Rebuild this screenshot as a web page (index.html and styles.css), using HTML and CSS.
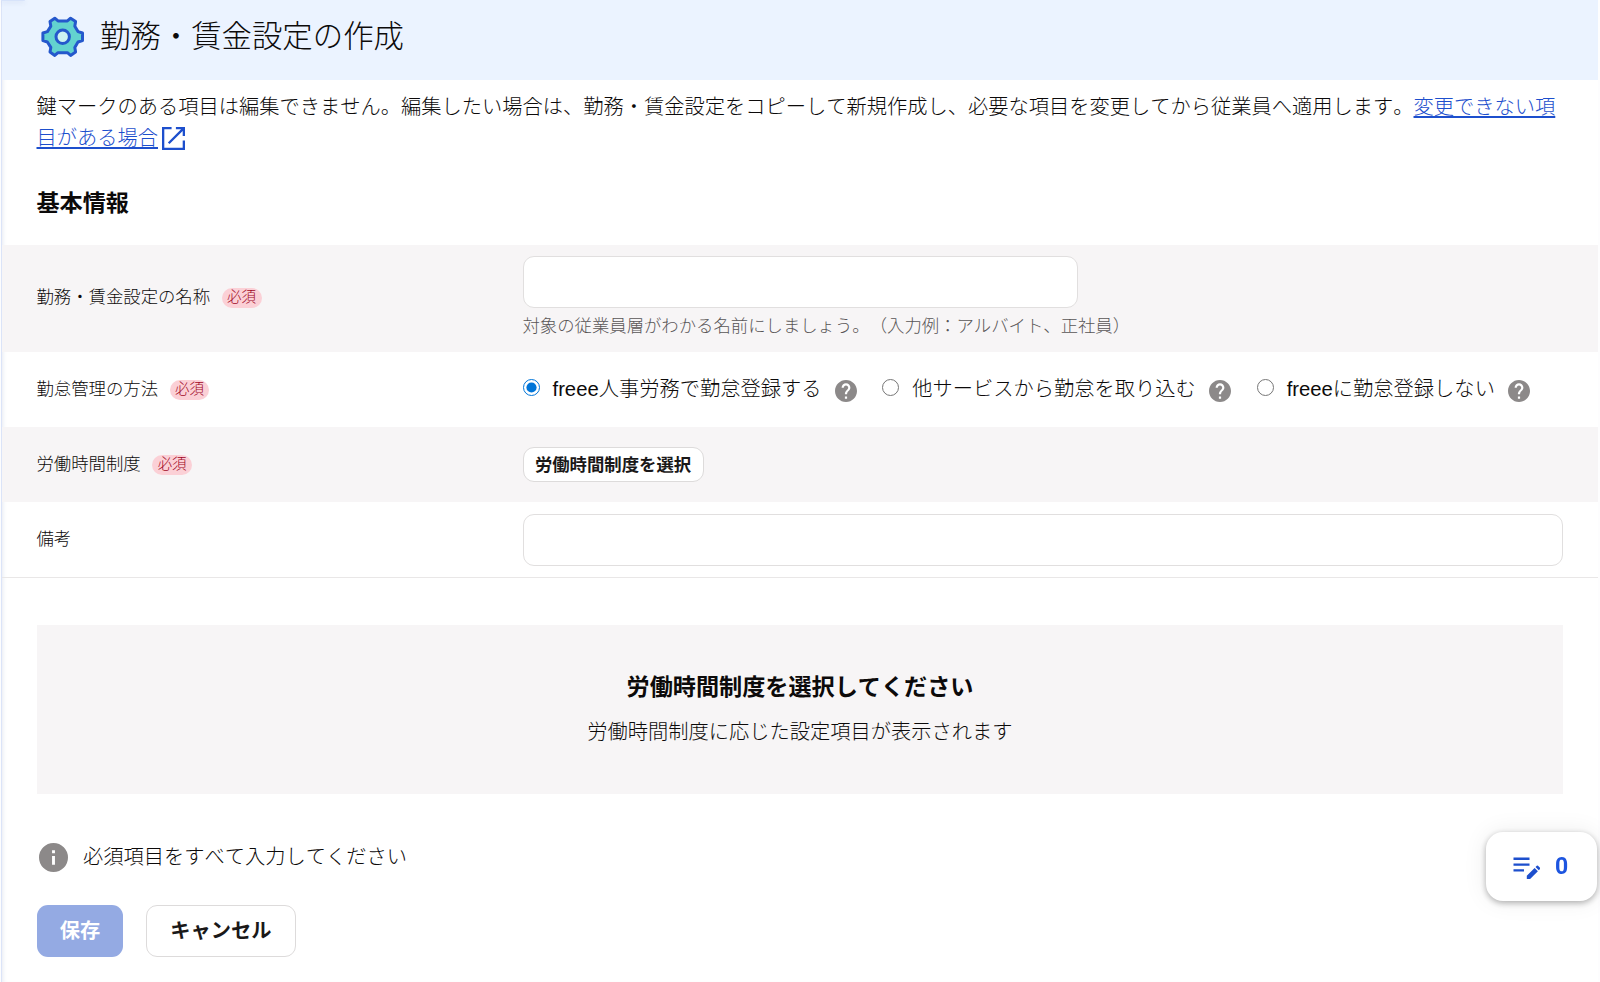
FILE: index.html
```
<!DOCTYPE html>
<html lang="ja">
<head>
    <meta charset="UTF-8">
    <meta name="viewport" content="width=device-width, initial-scale=1.0">
    <title>勤務・賃金設定の作成</title>
    <link rel="stylesheet" href="styles.css">
</head>
<body>
    <div class="page">
        <header class="page-header">
            <svg class="gear" viewBox="0 0 44 44">
                <path d="M9 6.500L13.800 3.200 17 5.900H26.400L29.600 3.200 34.600 6.500 33.800 11.200 37 16.600 41.500 18V25.600L37 27 33.800 32.400 34.600 37.100 29.600 40.400 26.400 37.700H17L13.800 40.400 9 37.100 9.800 32.400 6.400 27 1.900 25.600V18L6.400 16.600 9.800 11.200Z" fill="#63d3cf" stroke="#2558cc" stroke-width="3" stroke-linejoin="round"/>
                <circle cx="21.700" cy="21.800" r="6.700" fill="#cdf2f1" stroke="#2558cc" stroke-width="3"/>
            </svg>
            <h1>勤務・賃金設定の作成</h1>
        </header>

        <p class="lead">鍵マークのある項目は編集できません。編集したい場合は、勤務・賃金設定をコピーして新規作成し、必要な項目を変更してから従業員へ適用します。<a class="link" href="#">変更できない項目がある場合</a><svg class="external" viewBox="0 0 24 24"><path d="M10 1.200H1.200v21.600h21.600V14M14.500 1.200h8.300v8.300M22.300 1.700L7 17" fill="none" stroke="#1d4fcd" stroke-width="2.400"/></svg></p>

        <h2>基本情報</h2>

        <form class="settings" onsubmit="return false;">
            <div class="row row-name">
                <div class="label">勤務・賃金設定の名称<span class="badge">必須</span></div>
                <div class="field">
                    <input class="input input-name" type="text">
                    <div class="hint">対象の従業員層がわかる名前にしましょう。（入力例：アルバイト、正社員）</div>
                </div>
            </div>
            <div class="row">
                <div class="label">勤怠管理の方法<span class="badge">必須</span></div>
                <div class="field radios">
                    <label class="radio"><input type="radio" name="method" checked><span>freee人事労務で勤怠登録する</span></label>
                    <svg class="help" viewBox="0 0 24 24"><use href="#help-icon"/></svg>
                    <label class="radio"><input type="radio" name="method"><span>他サービスから勤怠を取り込む</span></label>
                    <svg class="help" viewBox="0 0 24 24"><use href="#help-icon"/></svg>
                    <label class="radio"><input type="radio" name="method"><span>freeeに勤怠登録しない</span></label>
                    <svg class="help" viewBox="0 0 24 24"><use href="#help-icon"/></svg>
                </div>
            </div>
            <div class="row">
                <div class="label">労働時間制度<span class="badge">必須</span></div>
                <div class="field">
                    <button class="btn btn-small" type="button">労働時間制度を選択</button>
                </div>
            </div>
            <div class="row row-note">
                <div class="label">備考</div>
                <div class="field">
                    <input class="input" type="text">
                </div>
            </div>
        </form>

        <section class="empty">
            <h3>労働時間制度を選択してください</h3>
            <p>労働時間制度に応じた設定項目が表示されます</p>
        </section>

        <div class="notice">
            <svg class="info" viewBox="0 0 24 24"><path d="M12 0a12 12 0 1 0 0 24 12 12 0 0 0 0-24zm1.200 18h-2.400v-7.200h2.400zm0-9.600h-2.400V6h2.400z" fill="#8c8989"/></svg>
            <span>必須項目をすべて入力してください</span>
        </div>

        <div class="actions">
            <button class="btn btn-primary" type="button">保存</button>
            <button class="btn btn-cancel" type="button">キャンセル</button>
        </div>
    </div>

    <!-- Bottom edge of the panel scrolled off the top -->
    <div class="corner"></div>

    <!-- Floating memo button -->
    <button class="memo" type="button">
        <svg class="memo-icon" viewBox="0 0 27 25"><path d="M.5 4.700h16M.5 10.600h16M.5 16.400h10.500" fill="none" stroke="#1d4fcd" stroke-width="2.400"/><path d="M13.800 25v-3.300l7.800-7.800 3.300 3.300L17.100 25zM22.500 13l1.300-1.300q.6-.5 1.200 0l2 2q.5.600 0 1.200L25.800 16.300z" fill="#1d4fcd"/></svg>
        <span>0</span>
    </button>

    <svg class="symbols">
        <symbol id="help-icon" viewBox="2 2 20 20">
            <path d="M12 2C6.480 2 2 6.480 2 12s4.480 10 10 10 10-4.480 10-10S17.520 2 12 2zm1 17h-2v-2h2v2zm2.070-7.750l-.9.920C13.450 12.900 13 13.500 13 15h-2v-.5c0-1.100.450-2.100 1.170-2.830l1.240-1.260c.370-.360.590-.860.590-1.410 0-1.100-.9-2-2-2s-2 .9-2 2H8c0-2.210 1.790-4 4-4s4 1.790 4 4c0 .880-.360 1.680-.930 2.250z" fill="#8c8989"/>
        </symbol>
    </svg>
</body>
</html>
```
FILE: styles.css
```
* {
    box-sizing: border-box;
}

body {
    margin: 0;
    height: 982px;
    overflow: hidden;
    background-color: #fdfdfe;
    color: #0c0a0a;
    font-family: "Liberation Sans", "Noto Sans CJK JP", sans-serif;
    font-size: 20.25px;
    font-weight: 300;
    font-kerning: none;
    line-height: 31px;
    text-spacing-trim: space-all;
}

h1, h2, h3, p {
    margin: 0;
}

/* Page frame */
.page {
    height: 982px;
    margin: 0 2px 0 1px;
    background-color: #fff;
    border-left: 1px solid #dbe4f8;
    box-shadow: inset 4px 0 4px -3px rgba(60, 80, 150, 0.12);
}

.page-header {
    display: flex;
    align-items: center;
    height: 80px;
    padding: 0 0 7px 39px;
    background-color: #ebf3ff;
}

.page-header h1 {
    margin-left: 15px;
    font-size: 30.4px;
    font-weight: 300;
}

.gear {
    width: 44px;
    height: 44px;
}

.corner {
    position: absolute;
    top: 0;
    left: 1px;
    width: 24px;
    height: 1px;
    border-bottom-right-radius: 4px;
    background-color: #d7e3fa;
    box-shadow: 0 1px 5px rgba(60, 80, 150, 0.25);
}

.lead {
    padding: 12px 34px 0 34.5px;
    font-size: 20.25px;
}

.link {
    color: #1d4fcd;
    text-decoration: underline;
    text-underline-offset: 2px;
}

.external {
    width: 23px;
    height: 23px;
    margin-left: 3.5px;
    vertical-align: -5px;
}

h2 {
    padding: 34px 34.5px 26px;
    font-size: 23.14px;
    font-weight: 700;
}

/* Settings rows */
.row {
    display: flex;
    align-items: center;
    height: 75px;
    padding: 0 35px 0 34.5px;
}

.row:nth-child(odd) {
    background-color: #f7f5f6;
}

.row-name {
    height: 107px;
}

.row-name .label {
    padding-bottom: 2px;
}

.row-name .field {
    padding-bottom: 7px;
}

.row-note {
    height: 76px;
    border-bottom: 1px solid #e9e7e7;
}

.label {
    display: flex;
    align-items: center;
    width: 486px;
    flex-shrink: 0;
    font-size: 17.37px;
}

.badge {
    height: 20px;
    margin-left: 11.5px;
    padding: 0 5.5px;
    border-radius: 10px;
    background-color: #fbd0d6;
    color: #a0061f;
    font-size: 14.47px;
    line-height: 19px;
}

.field {
    flex: 1;
}

.input {
    display: block;
    width: 100%;
    height: 52px;
    border: 1px solid #e1dfdf;
    border-radius: 11px;
    background-color: #fff;
}

.input-name {
    width: 555px;
}

.hint {
    height: 26px;
    padding-top: 5px;
    color: #595656;
    font-size: 17.37px;
    line-height: 26px;
}

.radios {
    display: flex;
    align-items: center;
    white-space: nowrap;
}

.radio {
    display: flex;
    align-items: center;
}

.radio input {
    width: 17px;
    height: 17px;
    margin: 0 13px 5px 0;
    accent-color: #0075d8;
}

.help {
    width: 22px;
    height: 22px;
    margin: 3px 25.3px 0 13.6px;
}

.symbols {
    display: none;
}

/* Buttons */
.btn {
    height: 52px;
    padding: 0 0 3px;
    border: 1px solid #dddbdb;
    border-radius: 11px;
    background-color: #fff;
    color: #1a1818;
    font-family: inherit;
    font-size: 20.25px;
    font-weight: 700;
}

.btn-small {
    display: block;
    width: 181px;
    height: 35px;
    font-size: 17.37px;
}

.btn-primary {
    width: 86px;
    border: none;
    background-color: #94aae3;
    color: #fff;
}

.btn-cancel {
    width: 150px;
}

/* Empty state */
.empty {
    height: 169px;
    margin: 47px 35px 0;
    padding-top: 47px;
    background-color: #f7f5f6;
    text-align: center;
}

.empty h3 {
    font-size: 23.14px;
    font-weight: 700;
}

.empty p {
    margin-top: 14px;
}

.notice {
    display: flex;
    align-items: center;
    margin-top: 48px;
    padding-left: 37px;
}

.info {
    width: 29px;
    height: 29px;
    margin-right: 15px;
}

.actions {
    display: flex;
    gap: 23px;
    padding: 32px 35px 0;
}

/* Memo button over the page */
.memo {
    position: fixed;
    top: 832px;
    left: 1486px;
    display: flex;
    align-items: center;
    width: 111px;
    height: 69px;
    padding: 0 0 0 27px;
    border: none;
    border-radius: 17px;
    background-color: #fff;
    box-shadow: 0 2px 6px rgba(0, 0, 0, 0.3), 0 0 24px rgba(0, 0, 0, 0.08);
    color: #1d55e0;
    font-family: Roboto, sans-serif;
    font-size: 23px;
    font-weight: 700;
}

.memo-icon {
    width: 27px;
    height: 25px;
    margin-right: 15px;
}
```
